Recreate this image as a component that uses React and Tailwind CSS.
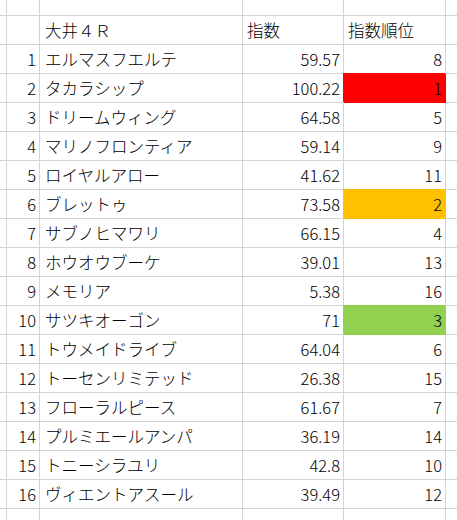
import React from 'react';

// 大井4R 指数シート (Excel風)
const rows = [
  [1, 'エルマスフエルテ', '59.57', 8],
  [2, 'タカラシップ', '100.22', 1, 'bg-[#ff0000] shadow-[-1px_-1px_0_0_#ff0000]'],
  [3, 'ドリームウィング', '64.58', 5],
  [4, 'マリノフロンティア', '59.14', 9],
  [5, 'ロイヤルアロー', '41.62', 11],
  [6, 'ブレットゥ', '73.58', 2, 'bg-[#ffc000] shadow-[-1px_-1px_0_0_#ffc000]'],
  [7, 'サブノヒマワリ', '66.15', 4],
  [8, 'ホウオウブーケ', '39.01', 13],
  [9, 'メモリア', '5.38', 16],
  [10, 'サツキオーゴン', '71', 3, 'bg-[#92d050] shadow-[-1px_-1px_0_0_#92d050]'],
  [11, 'トウメイドライブ', '64.04', 6],
  [12, 'トーセンリミテッド', '26.38', 15],
  [13, 'フローラルピース', '61.67', 7],
  [14, 'プルミエールアンパ', '36.19', 14],
  [15, 'トニーシラユリ', '42.8', 10],
  [16, 'ヴィエントアスール', '39.49', 12],
];

const cell = 'h-[29px] border-r border-b border-[#d4d4d4] flex items-center overflow-hidden whitespace-nowrap';

const App = () => {
  return (
    <div
      className="w-[458px] h-[520px] overflow-hidden bg-white text-black text-[16.5px] font-light leading-none"
      style={{ fontFamily: '"Noto Sans CJK JP", "Noto Sans", sans-serif' }}
    >
      <div className="grid grid-cols-[7px_33px_203px_101px_102px_1fr]">
        {/* 上の切れた行 */}
        {[0, 1, 2, 3, 4, 5].map((i) => (
          <div key={i} className="h-[16px] border-r border-b border-[#d4d4d4]" />
        ))}

        {/* 見出し */}
        <div className={cell} />
        <div className={cell} />
        <div className={`${cell} pl-[5px]`}>大井４Ｒ</div>
        <div className={`${cell} pl-[4px]`}>指数</div>
        <div className={`${cell} pl-[4px]`}>指数順位</div>
        <div className={cell} />

        {rows.map(([no, name, score, rank, fill]) => (
          <React.Fragment key={no}>
            <div className={cell} />
            <div className={`${cell} justify-end pr-[3px]`}>{no}</div>
            <div className={`${cell} pl-[5px]`}>{name}</div>
            <div className={`${cell} justify-end pr-[3px]`}>{score}</div>
            <div className={`${cell} justify-end pr-[3px] ${fill ? `${fill} border-transparent` : ''}`}>{rank}</div>
            <div className={cell} />
          </React.Fragment>
        ))}

        {/* 下の切れた行 */}
        {[0, 1, 2, 3, 4, 5].map((i) => (
          <div key={`b${i}`} className="h-[29px] border-r border-[#d4d4d4]" />
        ))}
      </div>
    </div>
  );
};

export default App;
